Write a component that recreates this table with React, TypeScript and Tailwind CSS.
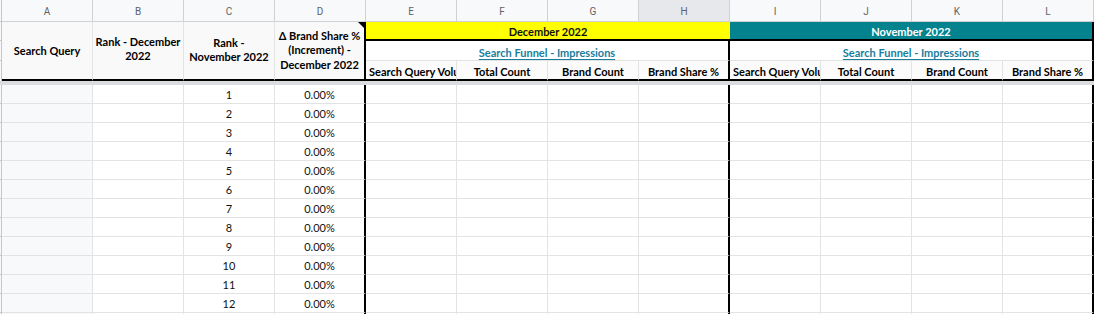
import React from "react";

const letters = ["A", "B", "C", "D", "E", "F", "G", "H", "I", "J", "K", "L"];
const GRID = "border-[#e2e3e3]";

function DataRow({ n }: { n?: number }) {
  return (
    <>
      <div className="h-[19px] bg-[#f8f9fa] border-r border-b border-[#c4c7c5]" />
      <div className={`h-[19px] bg-[#f8f9fa] border-r border-b ${GRID}`} />
      <div className={`h-[19px] border-r border-b ${GRID}`} />
      <div className={`h-[19px] border-r border-b ${GRID} flex items-end justify-center leading-[15px] pb-[1px] text-[11px] text-[#111]`}>
        {n !== undefined ? n : ""}
      </div>
      <div className={`h-[19px] border-b ${GRID} border-r-2 border-r-black flex items-end justify-center leading-[15px] pb-[1px] text-[11px] text-[#111]`}>
        {n !== undefined ? "0.00%" : ""}
      </div>
      <div className={`h-[19px] border-r border-b ${GRID}`} />
      <div className={`h-[19px] border-r border-b ${GRID}`} />
      <div className={`h-[19px] border-r border-b ${GRID}`} />
      <div className={`h-[19px] border-b ${GRID} border-r-2 border-r-black`} />
      <div className={`h-[19px] border-r border-b ${GRID}`} />
      <div className={`h-[19px] border-r border-b ${GRID}`} />
      <div className={`h-[19px] border-r border-b ${GRID}`} />
      <div className={`h-[19px] border-b ${GRID} border-r-2 border-r-black`} />
    </>
  );
}

export default function App() {
  const rows = Array.from({ length: 12 }, (_, i) => i + 1);
  return (
    <div
      className="w-[1095px] h-[314px] overflow-hidden bg-white text-black"
      style={{ fontFamily: "Lato, 'Open Sans', Arial, sans-serif" }}
    >
      {/* Column letters */}
      <div className="grid grid-cols-[2px_repeat(12,91px)]">
        <div className="h-[22px] bg-[#f8f9fa] border-r border-b border-[#c4c7c5]" />
        {letters.map((l) => (
          <div
            key={l}
            className={`h-[22px] border-r border-b border-[#cfd1d4] flex items-center justify-center pt-[1px] text-[10px] text-[#5f6368] ${
              l === "H" ? "bg-[#e6e8eb]" : "bg-[#f8f9fa]"
            }`}
            style={{ fontFamily: "Roboto, Arial, sans-serif" }}
          >
            {l}
          </div>
        ))}
      </div>

      {/* Frozen header rows */}
      <div className="grid grid-cols-[2px_repeat(12,91px)] grid-rows-[19px_20px_20px] text-[11px] font-bold">
        {/* row 1 */}
        <div className="bg-[#f8f9fa] border-r border-b border-[#c4c7c5]" />
        <div className={`row-span-3 bg-[#f9f9fa] border-r ${GRID} border-b-2 border-b-black flex items-center justify-center text-center leading-[14px]`}>
          Search Query
        </div>
        <div className={`row-span-3 bg-[#f9f9fa] border-r ${GRID} border-b-2 border-b-black flex items-center justify-center text-center leading-[14px] pb-[3px]`}>
          <span>
            Rank - December
            <br />
            2022
          </span>
        </div>
        <div className={`row-span-3 bg-[#f9f9fa] border-r ${GRID} border-b-2 border-b-black flex items-center justify-center text-center leading-[14px] pb-[2px]`}>
          <span>
            Rank -
            <br />
            November 2022
          </span>
        </div>
        <div className="row-span-3 relative bg-[#f9f9fa] border-r-2 border-r-black border-b-2 border-b-black flex items-center justify-center text-center leading-[14.5px]">
          <span>
            Δ Brand Share %
            <br />
            (Increment) -
            <br />
            December 2022
          </span>
          <div className="absolute top-0 right-0 w-0 h-0 border-l-[6px] border-l-transparent border-t-[6px] border-t-black" />
        </div>
        <div className="col-span-4 bg-[#ffff00] border-b-2 border-b-black flex items-end justify-center leading-[15px] text-[#111]">
          December 2022
        </div>
        <div className="col-span-4 bg-[#04838f] border-b-2 border-b-black border-r-2 border-r-black flex items-end justify-center leading-[15px] text-white">
          November 2022
        </div>

        {/* row 2 */}
        <div className="bg-[#f8f9fa] border-r border-b border-[#c4c7c5]" />
        <div className={`col-span-4 bg-white border-b ${GRID} border-r-2 border-r-black flex items-end justify-center leading-[15px]`}>
          <span className="underline text-[#1a7d9d] underline-offset-[2px]">Search Funnel - Impressions</span>
        </div>
        <div className={`col-span-4 bg-white border-b ${GRID} border-r-2 border-r-black flex items-end justify-center leading-[15px]`}>
          <span className="underline text-[#1a7d9d] underline-offset-[2px]">Search Funnel - Impressions</span>
        </div>

        {/* row 3 */}
        <div className="bg-[#f8f9fa] border-r border-[#c4c7c5]" />
        <div className={`bg-[#fbfbfb] border-r ${GRID} border-b-2 border-b-black flex items-end leading-[15px] pl-[3px] overflow-hidden whitespace-nowrap`}>
          Search Query Volume
        </div>
        <div className={`bg-[#fbfbfb] border-r ${GRID} border-b-2 border-b-black flex items-end justify-center leading-[15px]`}>
          Total Count
        </div>
        <div className={`bg-[#fbfbfb] border-r ${GRID} border-b-2 border-b-black flex items-end justify-center leading-[15px]`}>
          Brand Count
        </div>
        <div className="bg-[#fbfbfb] border-r-2 border-r-black border-b-2 border-b-black flex items-end justify-center leading-[15px]">
          Brand Share %
        </div>
        <div className={`bg-[#fbfbfb] border-r ${GRID} border-b-2 border-b-black flex items-end leading-[15px] pl-[3px] overflow-hidden whitespace-nowrap`}>
          Search Query Volume
        </div>
        <div className={`bg-[#fbfbfb] border-r ${GRID} border-b-2 border-b-black flex items-end justify-center leading-[15px]`}>
          Total Count
        </div>
        <div className={`bg-[#fbfbfb] border-r ${GRID} border-b-2 border-b-black flex items-end justify-center leading-[15px]`}>
          Brand Count
        </div>
        <div className="bg-[#fbfbfb] border-r-2 border-r-black border-b-2 border-b-black flex items-end justify-center leading-[15px]">
          Brand Share %
        </div>
      </div>

      {/* frozen divider */}
      <div className="h-[4px] w-[1094px] bg-[#dadce0]" />

      {/* data rows */}
      <div className="grid grid-cols-[2px_repeat(12,91px)]">
        {rows.map((n) => (
          <DataRow key={n} n={n} />
        ))}
        <DataRow />
      </div>
    </div>
  );
}
